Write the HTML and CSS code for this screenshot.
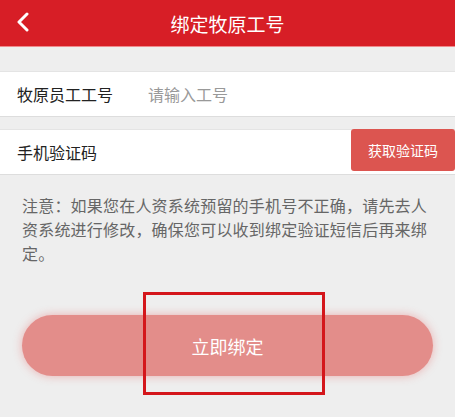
FILE: index.html
```html
<!DOCTYPE html>
<html lang="zh">
<head>
  <meta charset="UTF-8">
  <title>绑定牧原工号</title>
  <link rel="stylesheet" href="styles.css">
</head>
<body>

  <div class="header">
    <span class="back">
      <svg width="14" height="20" viewBox="0 0 14 20"><path d="M11 2 L3 10 L11 18" fill="none" stroke="#fff" stroke-width="3" stroke-linecap="round" stroke-linejoin="round"/></svg>
    </span>
    <h1>绑定牧原工号</h1>
  </div>

  <div class="row first">
    <label>牧原员工工号</label>
    <input type="text" placeholder="请输入工号">
  </div>

  <div class="row code">
    <label>手机验证码</label>
    <button class="getcode">获取验证码</button>
  </div>

  <p class="notice">注意：如果您在人资系统预留的手机号不正确，请先去人资系统进行修改，确保您可以收到绑定验证短信后再来绑定。</p>

  <div class="action">
    <button class="bind">立即绑定</button>
    <div class="mark"></div>
  </div>

</body>
</html>
```

FILE: styles.css
```css
body {
  margin: 0;
  background: #eeeeee;
  font-family: "Noto Sans CJK SC", "Noto Sans", sans-serif;
  width: 455px;
  height: 417px;
  overflow: hidden;
}
/* top bar */
.header {
  height: 46px;
  background: #d71e26;
  border-bottom: 1px solid #f08a8c;
  display: flex;
  align-items: center;
  justify-content: center;
  position: relative;
}
.header h1 {
  margin: 0;
  color: #fff;
  font-size: 19px;
  font-weight: normal;
}
.back {
  position: absolute;
  left: 16px;
  top: 12px;
}
/* form rows */
.row {
  background: #fff;
  height: 44px;
  display: flex;
  align-items: center;
  border-top: 1px solid #e4e4e4;
  border-bottom: 1px solid #dddddd;
}
.row.first {
  margin-top: 24px;
}
.row.code {
  margin-top: 12px;
  position: relative;
}
.row label {
  width: 129px;
  padding-left: 17px;
  font-size: 16px;
  color: #222;
}
.row input {
  border: none;
  outline: none;
  font-family: inherit;
  font-size: 16px;
  color: #333;
  background: transparent;
}
.row input::placeholder {
  color: #999;
}
.getcode {
  position: absolute;
  right: 0;
  top: -1px;
  height: 42px;
  width: 104px;
  border: none;
  border-radius: 3px;
  background: #dc5550;
  color: #fff;
  font-family: inherit;
  font-size: 14px;
}
/* hint text */
.notice {
  margin: 18px 22px 0 22px;
  font-size: 16px;
  letter-spacing: 0.2px;
  line-height: 24px;
  color: #666;
}
/* main button */
.action {
  position: relative;
  padding: 50px 22px 0 22px;
}
.bind {
  width: 100%;
  height: 61px;
  border: none;
  border-radius: 31px;
  background: #e38d8a;
  color: #fff;
  font-family: inherit;
  font-size: 18px;
  box-shadow: 0 0 10px rgba(230, 60, 60, 0.35);
}
.mark {
  position: absolute;
  left: 143px;
  top: 27px;
  width: 176px;
  height: 97px;
  border: 3px solid #d4161b;
}
```
